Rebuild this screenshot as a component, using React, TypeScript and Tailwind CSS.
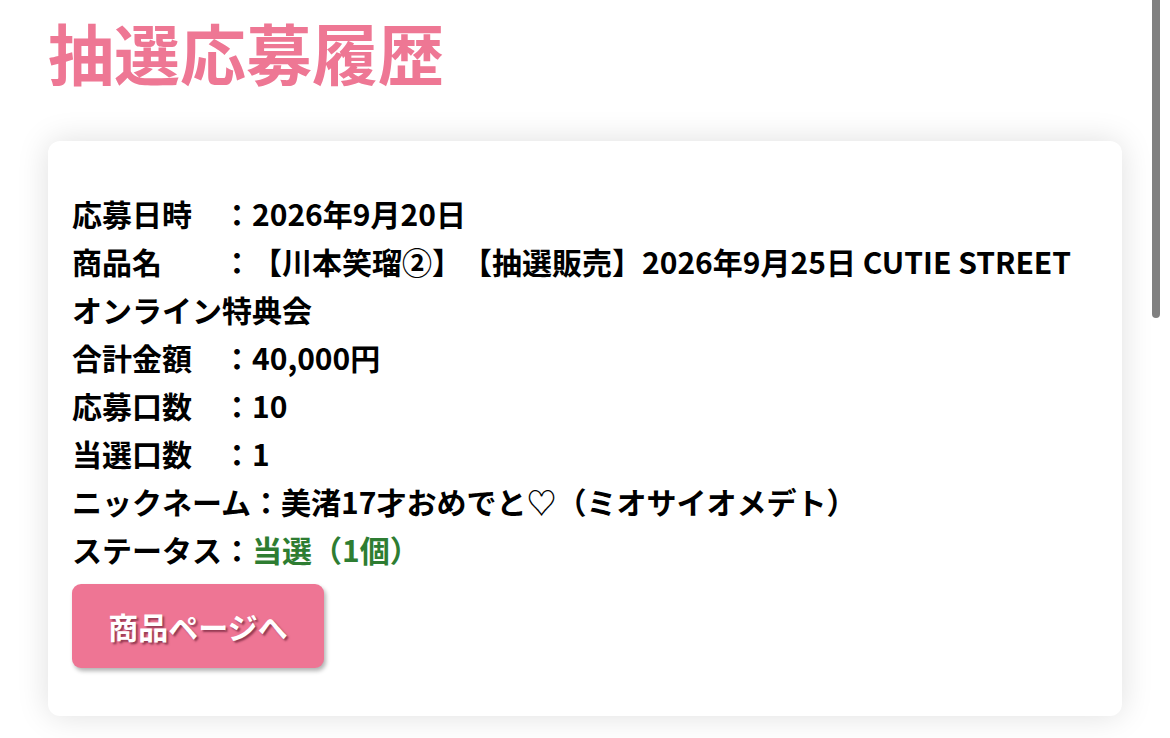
export default function App() {
  const rows: { label: string; value: React.ReactNode }[] = [
    { label: "応募日時　：", value: "2026年9月20日" },
    { label: "商品名　　：", value: "【川本笑瑠②】【抽選販売】2026年9月25日 CUTIE STREET オンライン特典会" },
    { label: "合計金額　：", value: "40,000円" },
    { label: "応募口数　：", value: "10" },
    { label: "当選口数　：", value: "1" },
    { label: "ニックネーム：", value: "美渚17才おめでと♡（ミオサイオメデト）" },
    { label: "ステータス：", value: <span className="text-[#2e7d32]">当選（1個）</span> },
  ];

  return (
    <div
      className="relative min-h-screen bg-white px-[48px] pt-[3px] pb-[40px] text-black [text-spacing-trim:space-all]"
      style={{ fontFamily: '"Noto Sans CJK JP", "Noto Sans", sans-serif' }}
    >
      <h1 className="text-[66px] font-bold leading-[96px] text-[#ee7794]">抽選応募履歴</h1>

      <div className="mt-[42px] rounded-[12px] bg-white px-[24px] pt-[48px] pb-[48px] shadow-[0_0_32px_rgba(0,0,0,0.13)]">
        <div className="text-[30px] font-bold leading-[48px]">
          {rows.map((r) => (
            <p key={r.label}>
              {r.label}
              {r.value}
            </p>
          ))}
        </div>
        <button className="mt-[11px] flex h-[84px] w-[252px] items-center justify-center rounded-[9px] bg-[#ee7594] text-[30px] font-bold text-white shadow-[2px_3px_4px_rgba(0,0,0,0.3)] [text-shadow:2px_2px_2px_rgba(90,20,40,0.6)]">
          商品ページへ
        </button>
      </div>

      {/* page scroll indicator */}
      <div className="absolute top-0 right-[10px] h-[318px] w-[8px] rounded-b-full bg-[#808080]" />
    </div>
  );
}
